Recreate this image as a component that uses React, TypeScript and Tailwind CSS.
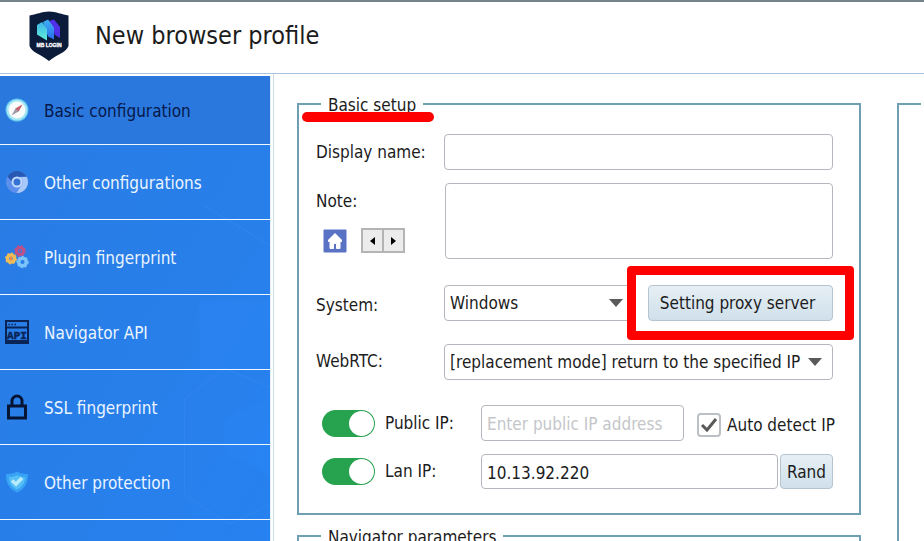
import React from "react";
import { clsx } from "clsx";

function Logo() {
  return (
    <svg viewBox="0 0 40 50" className="h-[50px] w-10" role="img" aria-label="Logo">
      <defs>
        <linearGradient id="cyan" x1="0" y1="0" x2="0" y2="1">
          <stop offset="0" stopColor="#3fb4e8" />
          <stop offset="1" stopColor="#5ff0d8" />
        </linearGradient>
        <linearGradient id="blue" x1="0" y1="0" x2="0" y2="1">
          <stop offset="0" stopColor="#3fb0f0" />
          <stop offset="1" stopColor="#2a6cf0" />
        </linearGradient>
      </defs>
      <path
        d="M0.5 4.5C7 3.5 13 0.5 20 0.5S33 3.5 39.5 4.5V35C37 42 28 43 20 50C12 43 3 42 0.5 35Z"
        fill="#0b1c3a"
      />
      <path d="M20 10l5-1.5 6 7.5v11l-5-3z" fill="#5030e6" />
      <path d="M14 11l5-2.500 6 8v12l-6-3z" fill="url(#blue)" />
      <path d="M8 14l5-3 5 7v11.500l-10-6z" fill="url(#cyan)" />
      <text
        x="20"
        y="36"
        textAnchor="middle"
        fontSize="5"
        fontWeight="700"
        fill="#fff"
        stroke="#fff"
        strokeWidth="0.3"
        fontFamily="Liberation Sans, sans-serif"
      >
        MB LOGIN
      </text>
    </svg>
  );
}

function CompassIcon() {
  return (
    <svg viewBox="0 0 24 24" className="size-6">
      <circle cx="12" cy="12" r="11.500" fill="#5cc0ee" />
      <circle cx="12" cy="12" r="10.500" fill="#a4e6f4" />
      <circle cx="12" cy="12" r="8.500" fill="#f8fbfa" />
      <path d="M17.500 6.500l-4 7-7 4 4-7z" fill="#a09aa6" />
      <path d="M17.500 6.500l-4 7-3-3z" fill="#c8606c" />
    </svg>
  );
}

function ChromiumIcon() {
  return (
    <svg viewBox="0 0 24 24" className="size-6">
      <circle cx="12" cy="12" r="11" fill="#5c90ec" />
      <path d="M2.500 6.500A11 11 0 0 1 21.500 6.500L12 7A6 6 0 0 0 7 12z" fill="#2758b4" />
      <path d="M21.800 7A11 11 0 0 1 11.500 23L17 14.500A6 6 0 0 0 15 7z" fill="#a9c8fa" />
      <circle cx="12" cy="12" r="5.500" fill="#c4dafc" />
      <circle cx="12" cy="12" r="3.500" fill="#3672d4" />
    </svg>
  );
}

function PluginIcon() {
  return (
    <svg viewBox="0 0 24 24" className="size-6" fill="none">
      <circle cx="15" cy="6" r="3.500" stroke="#c05088" strokeWidth="3" />
      <circle cx="15" cy="6" r="5" stroke="#c05088" strokeWidth="1.500" strokeDasharray="2 2" />
      <circle cx="15" cy="6" r="1" fill="#c05088" />
      <circle cx="6" cy="13.500" r="3.500" stroke="#f0bc58" strokeWidth="3.500" />
      <circle cx="6" cy="13.500" r="5.200" stroke="#f0bc58" strokeWidth="1.500" strokeDasharray="2 2" />
      <path d="M6 11.500v4" stroke="#f08a4c" strokeWidth="2" />
      <circle cx="17.500" cy="17" r="3.800" stroke="#7cc4fa" strokeWidth="3.500" />
      <circle cx="17.500" cy="17" r="5.400" stroke="#7cc4fa" strokeWidth="1.500" strokeDasharray="2 2" />
    </svg>
  );
}

function ApiIcon() {
  return (
    <svg viewBox="0 0 24 24" className="size-6">
      <rect x="1" y="1" width="22" height="22" fill="none" stroke="#0a2456" strokeWidth="2" />
      <path d="M1 7.500h22" stroke="#0a2456" strokeWidth="2" />
      <path d="M3.500 4.500h1.500M6.500 4.500h1.500M9.500 4.500h1.500" stroke="#0a2456" strokeWidth="1.500" />
      <path d="M2 21h20" stroke="#0a2456" strokeWidth="2" />
      <text
        x="12"
        y="19"
        textAnchor="middle"
        fontSize="11"
        fontWeight="700"
        fill="#0a2456"
        stroke="#0a2456"
        strokeWidth="0.5"
        fontFamily="Liberation Mono, monospace"
      >
        API
      </text>
    </svg>
  );
}

function LockIcon() {
  return (
    <svg viewBox="0 0 24 26" className="h-[26px] w-6" fill="none" stroke="#061433" strokeWidth="3">
      <rect x="3.500" y="12" width="17" height="12" />
      <path d="M7 12V7a5 5 0 0 1 10 0v5" />
    </svg>
  );
}

function ShieldIcon() {
  return (
    <svg viewBox="0 0 24 24" className="size-6">
      <path d="M12 1.500c3 2 7 2.500 11 2.500 0 9-3 15-11 18.500C4 19 1 13 1 4c4 0 8-.5 11-2.500z" fill="#38a2f4" />
      <path d="M12 5c2 1.500 5 2 8 2 0 6-2.500 10-8 12.500C6.500 17 4 13 4 7c3 0 6-.5 8-2z" fill="#56c0f6" />
      <path d="M7 10.500l4 3.500 6-6" fill="none" stroke="#b8ecfc" strokeWidth="3.500" />
    </svg>
  );
}

const menu = [
  { label: "Basic configuration", icon: CompassIcon, active: true },
  { label: "Other configurations", icon: ChromiumIcon },
  { label: "Plugin fingerprint", icon: PluginIcon },
  { label: "Navigator API", icon: ApiIcon },
  { label: "SSL fingerprint", icon: LockIcon },
  { label: "Other protection", icon: ShieldIcon },
];

const inputStyle =
  "min-w-0 rounded-sm border border-[#b4b8be] bg-white px-[5px] pt-0.5 text-[#1c1c1c] placeholder:text-[#c4c6ca] outline-none";
const buttonStyle =
  "rounded-sm border border-[#b4c4d0] bg-linear-to-b from-[#e6eff5] to-[#d0e0ea] pt-0.5 text-[17px] text-[#1c1c1c]";

function Select({ id, value }: { id: string; value: string }) {
  return (
    <div className="relative min-w-0 flex-1">
      <select id={id} className={clsx(inputStyle, "h-9 w-full appearance-none")}>
        <option>{value}</option>
      </select>
      <svg viewBox="0 0 14 8" className="pointer-events-none absolute top-3.5 right-[11px] h-2 w-3.5">
        <path d="M0 0h14L7 8z" fill="#5a5a5a" />
      </svg>
    </div>
  );
}

function Switch({ id }: { id: string }) {
  return (
    <input
      id={id}
      type="checkbox"
      role="switch"
      defaultChecked
      className="relative h-[27px] w-[53px] shrink-0 appearance-none rounded-full bg-[#27a350] before:absolute before:top-px before:left-px before:size-[25px] before:rounded-full before:bg-white checked:before:left-[27px]"
    />
  );
}

function Group({
  title,
  className,
  legendClass = "ml-[22px]",
  children,
}: {
  title: string;
  className?: string;
  legendClass?: string;
  children?: React.ReactNode;
}) {
  return (
    <fieldset className={clsx("relative min-w-0 border-[#6f9fb2]", className)}>
      <legend className={clsx("h-5 px-[7px] leading-[22px] whitespace-nowrap", legendClass)}>{title}</legend>
      {children}
    </fieldset>
  );
}

export default function App() {
  return (
    <div className="flex h-screen flex-col overflow-hidden border-t-2 border-[#74828a] bg-white font-['DejaVu_Sans_Condensed','DejaVu_Sans',sans-serif] text-[17px] text-[#1c1c1c]">
      <header className="flex h-[72px] shrink-0 items-center border-b border-[#a9c4de] pb-[3px] pl-[29px]">
        <Logo />
        <h1 className="ml-[26px] text-[25px]">New browser profile</h1>
      </header>

      <div className="flex min-h-0 flex-1">
        <nav className="relative mt-0.5 w-[271px] shrink-0 overflow-hidden border-r border-[#e4f0fa] bg-linear-to-br from-[#2a7be2] to-[#2682f0]">
          {/* faint hexagon pattern */}
          <svg viewBox="0 0 271 465" className="absolute inset-0" fill="none" stroke="#4a98f6" strokeOpacity="0.25">
            <path d="M185 325l40-32 46 20M185 325v95l45 30 41-20M271 170l-66-40" />
            <path d="M200 225h71v70h-71zM225 345l46-24v80l-46-22z" fill="#2f8cff" fillOpacity="0.2" stroke="none" />
          </svg>
          <ul className="relative">
            {menu.map(({ label, icon: Icon, active }) => (
              <li key={label} className="border-b border-[#f0f8ff]">
                <a
                  href="#"
                  className={clsx(
                    "flex items-center gap-[15px] pl-[5px]",
                    active ? "h-[68px] bg-[#2a78de] text-[#06184a]" : "h-[74px] text-[#eaf4ff]"
                  )}
                >
                  <Icon />
                  <span className="pt-1">{label}</span>
                </a>
              </li>
            ))}
          </ul>
        </nav>

        <main className="ml-0.5 flex min-w-0 flex-1 gap-9 border-l border-[#c8dcea] pt-5 pl-[23px]">
          <div className="flex min-w-0 flex-1 flex-col gap-[11px]">
            <Group title="Basic setup" legendClass="ml-[5px]" className="shrink-0 border-2 pr-[26px] pb-6 pl-[17px]">
              {/* red marker under the title */}
              <span className="absolute top-[-2px] left-[3px] h-2.5 w-[132px] rounded-full bg-[#ff0000]" />

              <div className="mt-5 flex items-center">
                <label htmlFor="name" className="w-32 shrink-0 pt-0.5">Display name:</label>
                <input id="name" className={clsx(inputStyle, "h-9 flex-1")} />
              </div>

              <div className="mt-[13px] flex">
                <div className="w-32 shrink-0 pt-1.5">
                  <label htmlFor="note" className="block leading-6">Note:</label>
                  <div className="mt-[15px] flex items-center pl-[7px]">
                    <button type="button" aria-label="Home">
                      <svg viewBox="0 0 24 24" className="size-6">
                        <rect x="0.500" y="0.500" width="23" height="23" rx="1" fill="#5a72c4" />
                        <path
                          d="M12 4.500L5.500 11v1.500H7v7h3.500v-5h3v5H17v-7h1.500V11z"
                          fill="#fff"
                          stroke="#fff"
                          strokeLinejoin="round"
                        />
                      </svg>
                    </button>
                    <div className="ml-3.5 flex border-2 border-[#b4b4b4] bg-[#ececec]">
                      <button type="button" aria-label="Previous" className="flex h-[21px] w-[19px] items-center justify-center">
                        <svg viewBox="0 0 5 8" className="h-2 w-[5px]"><path d="M5 0v8L0 4z" /></svg>
                      </button>
                      <button type="button" aria-label="Next" className="flex h-[21px] w-[21px] items-center justify-center border-l-2 border-[#b4b4b4]">
                        <svg viewBox="0 0 5 8" className="h-2 w-[5px]"><path d="M0 0v8l5-4z" /></svg>
                      </button>
                    </div>
                  </div>
                </div>
                <textarea id="note" className={clsx(inputStyle, "ml-px h-19 flex-1 resize-none")} />
              </div>

              <div className="mt-[26px] flex items-center">
                <label htmlFor="system" className="w-32 shrink-0 pt-1.5">System:</label>
                <Select id="system" value="Windows" />
                <div className="relative ml-3.5 w-[185px]">
                  <button type="button" className={clsx(buttonStyle, "h-9 w-full pr-1.5")}>Setting proxy server</button>
                  <span className="pointer-events-none absolute -inset-x-[21px] -inset-y-[19px] rounded-sm border-9 border-[#ff0000]" />
                </div>
              </div>

              <div className="mt-[23px] flex items-center">
                <label htmlFor="webrtc" className="w-32 shrink-0">WebRTC:</label>
                <Select id="webrtc" value="[replacement mode] return to the specified IP" />
              </div>

              <div className="mt-[25px] flex items-center pl-1.5">
                <Switch id="public" />
                <label htmlFor="public" className="ml-2.5 w-24 shrink-0 pt-0.5">Public IP:</label>
                <input
                  aria-label="Public IP address"
                  placeholder="Enter public IP address"
                  className={clsx(inputStyle, "h-9 flex-1")}
                />
                <div className="ml-[13px] flex shrink-0 items-center pt-1">
                  <div className="relative size-6">
                    <input
                      id="detect"
                      type="checkbox"
                      defaultChecked
                      className="size-6 appearance-none rounded-sm border-2 border-[#bcc0c4]"
                    />
                    <svg
                      viewBox="0 0 24 24"
                      className="pointer-events-none absolute inset-0"
                      fill="none"
                      stroke="#5a5a5a"
                      strokeWidth="3"
                    >
                      <path d="M5 12l5 5 9-11" />
                    </svg>
                  </div>
                  <label htmlFor="detect" className="ml-1.5 w-[106px] pt-0.5 whitespace-nowrap">Auto detect IP</label>
                </div>
              </div>

              <div className="mt-[13px] flex items-center pl-1.5">
                <Switch id="lan" />
                <label htmlFor="lan" className="ml-2.5 w-24 shrink-0">Lan IP:</label>
                <input
                  aria-label="Lan IP address"
                  defaultValue="10.13.92.220"
                  className={clsx(inputStyle, "h-[35px] flex-1")}
                />
                <button type="button" className={clsx(buttonStyle, "ml-0.5 h-[35px] w-[53px]")}>Rand</button>
              </div>
            </Group>

            <Group title="Navigator parameters" className="h-40 shrink-0 border-2" />
          </div>

          <Group title="" className="-mb-2 w-[27px] shrink-0 border-2 border-r-0" />
        </main>
      </div>
    </div>
  );
}
